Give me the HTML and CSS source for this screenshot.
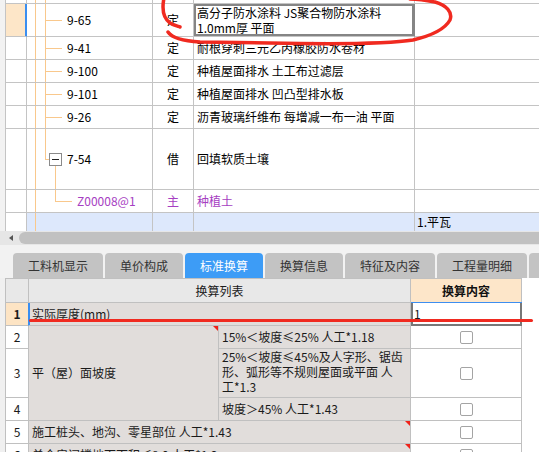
FILE: index.html
```html
<!DOCTYPE html>
<html lang="zh-CN">
<head>
<meta charset="utf-8">
<title>标准换算</title>
<link rel="stylesheet" href="styles.css">
</head>
<body>
<div class="top">
  <div class="tree-grid">
    <div class="row row-partial">
      <div class="cell a"></div><div class="cell b tr-pass"></div><div class="cell c"></div><div class="cell d"></div><div class="cell e"></div>
    </div>
    <div class="row row-main">
      <div class="cell a a-sel"></div>
      <div class="cell b tr-leaf">9-65</div>
      <div class="cell c">定</div>
      <div class="cell d d-edit"><span>高分子防水涂料 JS聚合物防水涂料</span><span>1.0mm厚 平面</span></div>
      <div class="cell e"></div>
    </div>
    <div class="row row-std">
      <div class="cell a"></div><div class="cell b tr-leaf">9-41</div><div class="cell c">定</div><div class="cell d">耐根穿刺三元乙丙橡胶防水卷材</div><div class="cell e"></div>
    </div>
    <div class="row row-std">
      <div class="cell a"></div><div class="cell b tr-leaf">9-100</div><div class="cell c">定</div><div class="cell d">种植屋面排水 土工布过滤层</div><div class="cell e"></div>
    </div>
    <div class="row row-std">
      <div class="cell a"></div><div class="cell b tr-leaf">9-101</div><div class="cell c">定</div><div class="cell d">种植屋面排水 凹凸型排水板</div><div class="cell e"></div>
    </div>
    <div class="row row-std">
      <div class="cell a"></div><div class="cell b tr-leaf">9-26</div><div class="cell c">定</div><div class="cell d">沥青玻璃纤维布 每增减一布一油 平面</div><div class="cell e"></div>
    </div>
    <div class="row row-tall">
      <div class="cell a"></div>
      <div class="cell b tr-node"><span class="toggle"></span>7-54</div>
      <div class="cell c">借</div>
      <div class="cell d">回填软质土壤</div>
      <div class="cell e"></div>
    </div>
    <div class="row row-std purple">
      <div class="cell a"></div><div class="cell b tr-child">Z00008@1</div><div class="cell c">主</div><div class="cell d">种植土</div><div class="cell e"></div>
    </div>
    <div class="row row-blue">
      <div class="cell a"></div><div class="cell b tr-last"></div><div class="cell c"></div><div class="cell d"></div>
      <div class="cell e e-notes"><span>1.平瓦</span><span>2.挂瓦条、顺水条</span></div>
    </div>
  </div>
</div>

<div class="hscroll"><span class="arrow"></span><span class="thumb"></span></div>

<div class="tabs">
  <div class="tab">工料机显示</div>
  <div class="tab">单价构成</div>
  <div class="tab active">标准换算</div>
  <div class="tab">换算信息</div>
  <div class="tab">特征及内容</div>
  <div class="tab">工程量明细</div>
  <div class="tab">说明信息</div>
</div>

<div class="calc-wrap">
  <div class="calc">
    <div class="k h c1"></div>
    <div class="k h c23 center">换算列表</div>
    <div class="k h hv c4 center">换算内容</div>

    <div class="k n n-sel c1">1</div>
    <div class="k t c23 t-sel">实际厚度(mm)</div>
    <div class="k v v-input c4">1</div>

    <div class="k n c1">2</div>
    <div class="k t c2 merged flag">平（屋）面坡度</div>
    <div class="k t c3">15%＜坡度≤25% 人工*1.18</div>
    <div class="k v c4"><span class="cb"></span></div>

    <div class="k n c1">3</div>
    <div class="k t c3 multi">25%＜坡度≤45%及人字形、锯齿<br>形、弧形等不规则屋面或平面 人<br>工*1.3</div>
    <div class="k v c4"><span class="cb"></span></div>

    <div class="k n c1">4</div>
    <div class="k t c3">坡度＞45% 人工*1.43</div>
    <div class="k v c4"><span class="cb"></span></div>

    <div class="k n c1">5</div>
    <div class="k t c23 flag">施工桩头、地沟、零星部位 人工*1.43</div>
    <div class="k v c4"><span class="cb"></span></div>

    <div class="k n c1">6</div>
    <div class="k t c23 flag">单个房间楼地面面积≤8.0 人工*1.2</div>
    <div class="k v c4"><span class="cb"></span></div>
  </div>
</div>

<svg class="mark-circle" width="539" height="60" viewBox="0 0 539 60">
  <path d="M164 -2 C162 8 163 18 170 23 C173 25 177 26 180 27" />
  <path d="M168 32 C172 38 182 41 200 42 L300 43.5 C350 44 395 43 413 40 C430 36 445 29 450 20 C453 12 446 5 435 2 C425 0 418 -1 410 -1" />
</svg>
<div class="mark-line"></div>
</body>
</html>
```

FILE: styles.css
```css
* { box-sizing: border-box; }
html, body { margin: 0; padding: 0; }
body {
  width: 539px;
  height: 452px;
  overflow: hidden;
  position: relative;
  background: #f2f2f2;
  font-family: "Noto Sans CJK SC", "Liberation Sans", sans-serif;
  font-size: 12px;
  color: #000;
}

/* ---------- top tree grid ---------- */
.top {
  height: 231px;
  overflow: hidden;
  background: #fff;
  border-left: 5px solid #f2f2f2;
}
.tree-grid { border-left: 1px solid #c4c4c4; }
.row {
  display: grid;
  grid-template-columns: 21px 126px 41px 221px 1fr;
}
.row-partial { height: 4px; }
.row-main { height: 33px; }
.row-std { height: 23px; }
.row-tall { height: 61px; }
.row-blue { height: 30px; }

.cell {
  border-right: 1px solid #c4c4c4;
  border-bottom: 1px solid #c4c4c4;
  display: flex;
  align-items: center;
  white-space: nowrap;
  line-height: 14px;
  overflow: hidden;
}
.cell.e { border-right: none; }
.cell.c { justify-content: center; }
.cell.d { padding-left: 3px; }
.cell.e { padding-left: 2px; }

.a-sel {
  background: #fde6c8;
  border-right-color: #3a8ef0;
  box-shadow: inset -1px 0 #3a8ef0;
}
.d-edit {
  flex-direction: column;
  align-items: flex-start;
  justify-content: center;
  line-height: 15px;
  box-shadow: inset 0 0 0 2px #858585;
  border-right-color: #858585;
}

.purple { color: #a63ec2; }

.row-blue .b, .row-blue .c, .row-blue .d, .row-blue .e { background-color: #dde8fc; }
.e-notes {
  flex-direction: column;
  align-items: flex-start;
  justify-content: flex-start;
  line-height: 15px;
  padding-top: 1px;
  padding-left: 3px;
}

/* tree guide lines */
.b {
  --o: #f9c88c;
  background-repeat: no-repeat;
  background-origin: border-box;
  padding-left: 40px;
}
.tr-pass {
  background-image: linear-gradient(var(--o), var(--o)), linear-gradient(var(--o), var(--o));
  background-size: 1px 100%, 1px 100%;
  background-position: 8px 0, 18px 0;
}
.tr-leaf {
  background-image: linear-gradient(var(--o), var(--o)), linear-gradient(var(--o), var(--o)), linear-gradient(var(--o), var(--o));
  background-size: 1px 100%, 1px 100%, 17px 1px;
  background-position: 8px 0, 18px 0, 18px 50%;
}
.tr-node {
  padding-left: 22px;
  background-image: linear-gradient(var(--o), var(--o)), linear-gradient(var(--o), var(--o)), linear-gradient(var(--o), var(--o)), linear-gradient(var(--o), var(--o));
  background-size: 1px 100%, 1px 50%, 5px 1px, 1px 50%;
  background-position: 8px 0, 18px 0, 18px 50%, 28px 100%;
}
.tr-child {
  padding-left: 50px;
  background-image: linear-gradient(var(--o), var(--o)), linear-gradient(var(--o), var(--o)), linear-gradient(var(--o), var(--o));
  background-size: 1px 100%, 1px 50%, 17px 1px;
  background-position: 8px 0, 28px 0, 28px 50%;
}
.tr-last {
  background-image: linear-gradient(var(--o), var(--o));
  background-size: 1px 100%;
  background-position: 8px 0;
}
.toggle {
  width: 13px;
  height: 13px;
  border: 1px solid #8a8a8a;
  background: #fff;
  margin-right: 5px;
  display: flex;
  align-items: center;
  justify-content: center;
  flex-shrink: 0;
}
.toggle::before {
  content: "";
  width: 7px;
  height: 1px;
  background: #222;
}

/* ---------- horizontal scrollbar ---------- */
.hscroll {
  height: 14px;
  display: flex;
  align-items: center;
  gap: 6px;
  padding-left: 9px;
  background: #e6e6e6;
}
.arrow {
  width: 0;
  height: 0;
  border-right: 4px solid #555;
  border-top: 3px solid transparent;
  border-bottom: 3px solid transparent;
}
.thumb {
  flex: 1;
  height: 12px;
  background: #c1c1c1;
  border-radius: 6px 0 0 6px;
}

/* ---------- tabs ---------- */
.tabs {
  height: 33px;
  display: flex;
  gap: 2px;
  padding: 8px 0 0 13px;
  overflow: hidden;
  background: #f2f2f2;
}
.tab {
  flex-shrink: 0;
  height: 25px;
  line-height: 25px;
  padding: 0 15px;
  background: #c3c3c3;
  color: #333;
  border-radius: 4px 4px 0 0;
  white-space: nowrap;
}
.tab.active { background: #3d9cf6; color: #fff; }

/* ---------- calc table ---------- */
.calc-wrap {
  background: #fff;
  border-left: 5px solid #f0f0f0;
  height: 174px;
  overflow: hidden;
}
.calc {
  display: grid;
  grid-template-columns: 23px 190px 192px 111px;
  grid-template-rows: 24px 23px 23px 49px 23px 23px 23px;
  width: max-content;
  border-left: 1px solid #c0c0c0;
  border-top: 1px solid #c0c0c0;
}
.k {
  position: relative;
  border-right: 1px solid #c0c0c0;
  border-bottom: 1px solid #c0c0c0;
  display: flex;
  align-items: center;
  line-height: 14px;
  white-space: nowrap;
  color: #1a1a1a;
}
.c1 { grid-column: 1; }
.c2 { grid-column: 2; }
.c3 { grid-column: 3; }
.c4 { grid-column: 4; }
.c23 { grid-column: 2 / span 2; }
.merged { grid-row: span 3; }

.h { background: #e8e8e8; }
.hv { background: #fde6c9; font-weight: bold; color: #111; }
.center { justify-content: center; }

.n { background: #fff; justify-content: center; }
.n-sel { background: #fde4c4; font-weight: bold; border-right-color: #3a8ef0; }
.t { background: #e1dddb; padding-left: 3px; }
.t-sel { box-shadow: inset 1px 0 #3a8ef0; }
.multi { line-height: 15px; padding-bottom: 3px; }
.v { background: #fff; justify-content: center; }
.v-input {
  justify-content: flex-start;
  padding-left: 3px;
  border-right-color: #787878;
  border-bottom-color: #787878;
  box-shadow: inset 2px 0 #787878, inset -1px 0 #787878, inset 0 -1px #787878, 0 -1px 0 #3d8ef0;
}
.cb {
  width: 13px;
  height: 13px;
  border: 1px solid #a4a4a4;
  border-radius: 2px;
  background: #fff;
}
.flag::after {
  content: "";
  position: absolute;
  top: 0;
  right: 0;
  border-top: 5px solid #f0231a;
  border-left: 5px solid transparent;
}

/* ---------- hand-drawn annotations ---------- */
.mark-circle {
  position: absolute;
  top: 0;
  left: 0;
  pointer-events: none;
}
.mark-circle path {
  fill: none;
  stroke: #f02a20;
  stroke-width: 3.5;
  stroke-linecap: round;
  stroke-linejoin: round;
}
.mark-line {
  position: absolute;
  top: 319px;
  left: 29px;
  width: 504px;
  height: 3px;
  background: #f02a20;
  border-radius: 2px;
}
```
